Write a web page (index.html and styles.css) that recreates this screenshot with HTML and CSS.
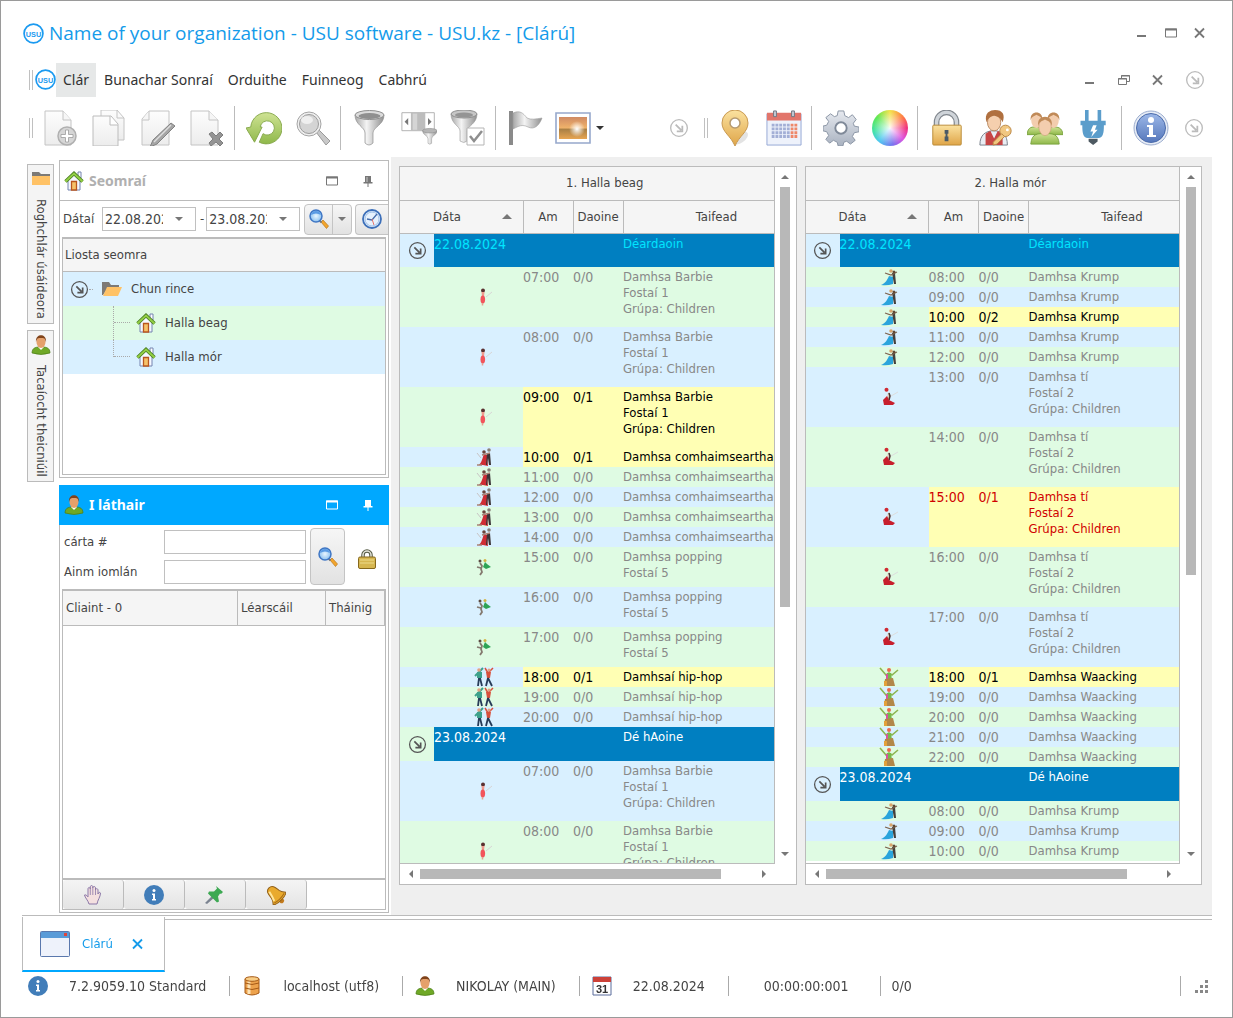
FILE: index.html
```html
<!DOCTYPE html>
<html lang="ga">
<head>
  <meta charset="UTF-8" />
  <title>USU software - Clárú</title>
  <link rel="stylesheet" href="styles.css">
</head>
<body>
  <!-- icon sprite -->
  <svg class="sprite" width="0" height="0" aria-hidden="true">
    <defs>
      <linearGradient id="g-page" x1="0" y1="0" x2="0" y2="1"><stop offset="0" stop-color="#fdfdfd"/><stop offset="1" stop-color="#ececec"/></linearGradient>
      <linearGradient id="g-metal" x1="0" y1="0" x2="1" y2="0"><stop offset="0" stop-color="#a8a8a8"/><stop offset=".4" stop-color="#f4f4f4"/><stop offset="1" stop-color="#8f8f8f"/></linearGradient>
      <linearGradient id="g-green" x1="0" y1="0" x2="0" y2="1"><stop offset="0" stop-color="#cfe394"/><stop offset="1" stop-color="#8fb84a"/></linearGradient>
      <linearGradient id="g-gold" x1="0" y1="0" x2="0" y2="1"><stop offset="0" stop-color="#fbe2a0"/><stop offset="1" stop-color="#dfa548"/></linearGradient>
      <linearGradient id="g-gear" x1="0" y1="0" x2="0" y2="1"><stop offset="0" stop-color="#e6e9ef"/><stop offset="1" stop-color="#a9b2c0"/></linearGradient>
      <linearGradient id="g-sun" x1="0" y1="0" x2="0" y2="1"><stop offset="0" stop-color="#cf8a64"/><stop offset=".5" stop-color="#f0b36a"/><stop offset=".55" stop-color="#a87f45"/><stop offset="1" stop-color="#e7a552"/></linearGradient>
      <linearGradient id="g-info" x1="0" y1="0" x2="0" y2="1"><stop offset="0" stop-color="#9db8e8"/><stop offset="1" stop-color="#5577bb"/></linearGradient>
      <radialGradient id="g-lens"><stop offset="0" stop-color="#e9f6ff"/><stop offset="1" stop-color="#8cc1f0"/></radialGradient>
      <radialGradient id="g-white"><stop offset="0" stop-color="#fff"/><stop offset="1" stop-color="#fff" stop-opacity="0"/></radialGradient>
    </defs>

    <symbol id="i-logo" viewBox="0 0 20 20">
      <circle cx="10" cy="10" r="9" fill="#fff" stroke="#1b9af0" stroke-width="1.6"/>
      <text x="10" y="13" text-anchor="middle" class="logo-text">USU</text>
    </symbol>
    <symbol id="i-add" viewBox="0 0 36 36">
      <path d="M3 1h18l8 9v25H3z" fill="url(#g-page)" stroke="#c4c4c4"/><path d="M21 1v9h8" fill="#f6f6f6" stroke="#c4c4c4"/>
      <circle cx="25" cy="26" r="9" fill="#d6d6d6" stroke="#b0b0b0" stroke-width="1.500"/><path d="M23.500 20h3v4.500h4.500v3h-4.500v4.500h-3v-4.500H19v-3h4.500z" fill="#fff" stroke="#9c9c9c" stroke-width=".8"/>
    </symbol>
    <symbol id="i-copy" viewBox="0 0 36 36">
      <path d="M10 0h16l7 8v22H10z" fill="url(#g-page)" stroke="#c4c4c4"/><path d="M26 0v8h7" fill="none" stroke="#c4c4c4"/>
      <path d="M2 6h18l7 8v22H2z" fill="url(#g-page)" stroke="#bcbcbc"/><path d="M19 6v9h8" fill="#fff" stroke="#bcbcbc"/>
    </symbol>
    <symbol id="i-edit" viewBox="0 0 36 36">
      <path d="M9 1h20v34H2V9z" fill="url(#g-page)" stroke="#c4c4c4"/><path d="M9 1v9H2" fill="#f6f6f6" stroke="#c4c4c4"/>
      <path d="M31 13l4 3-18 18-7 3 3-7z" fill="#a5a5a5" stroke="#828282"/><path d="M31 15L14 32" stroke="#dedede" stroke-width="1.500"/>
    </symbol>
    <symbol id="i-delete" viewBox="0 0 36 36">
      <path d="M2 1h18l9 9v25H2z" fill="url(#g-page)" stroke="#c4c4c4"/><path d="M20 1v9h9" fill="#f6f6f6" stroke="#c4c4c4"/>
      <path d="M20 24l3-2 4 4 4-4 3 3-4 4 4 4-3 3-4-4-5 4-2-3 4-4z" fill="#949494" stroke="#7d7d7d"/>
    </symbol>
    <symbol id="i-refresh" viewBox="0 0 38 36">
      <path d="M5 17A16.500 16.500 0 1 1 14 33L18 24A7.500 7.500 0 1 0 15 17L17 17L9 33L0 18Z" fill="url(#g-green)" stroke="#86a84c"/>
    </symbol>
    <symbol id="i-find" viewBox="0 0 36 36">
      <path d="M21 22l3-2 11 11-4 4z" fill="#c9c9c9" stroke="#9a9a9a"/>
      <circle cx="14" cy="14" r="12" fill="#efefef" stroke="#a5a5a5" stroke-width="1"/><circle cx="14" cy="14" r="9.500" fill="#d4d4d4" stroke="#9c9c9c"/><ellipse cx="12" cy="10" rx="6" ry="4" fill="#efefef"/>
    </symbol>
    <symbol id="i-funnel" viewBox="0 0 36 36">
      <path d="M3 5c0 10 10 12 10 18v10q4 4 8 0V23c0-6 11-8 11-18z" fill="url(#g-metal)" stroke="#909090" stroke-width=".7"/>
      <ellipse cx="17.500" cy="5" rx="14.500" ry="4.500" fill="#dcdcdc" stroke="#8e8e8e"/><ellipse cx="17.500" cy="6" rx="11" ry="3" fill="#8f8f8f"/>
    </symbol>
    <symbol id="i-slider" viewBox="0 0 40 36">
      <path d="M1 1h36v20H1z" fill="#fff" stroke="#ababab"/><path d="M11 1h16v20H11z" fill="#bdbdbd"/><path d="M13 2h5v18h-5z" fill="#d5d5d5"/>
      <path d="M8 7v8l-4-4zM30 7v8l4-4z" fill="#777"/>
      <path d="M24 21c0 5 6 5 6 9v5q2 2 4 0v-5c0-4 6-4 6-9z" fill="url(#g-metal)" stroke="#999" stroke-width=".6"/><ellipse cx="32" cy="21" rx="8" ry="2.500" fill="#b5b5b5" stroke="#8f8f8f" stroke-width=".7"/>
    </symbol>
    <symbol id="i-funnelcheck" viewBox="0 0 36 36">
      <path d="M1 4c0 10 9 12 9 17v10q4 3 7 0V21c0-5 10-7 10-17z" fill="url(#g-metal)" stroke="#999" stroke-width=".6"/>
      <ellipse cx="14" cy="4" rx="13" ry="4" fill="#c6c6c6" stroke="#8e8e8e"/><ellipse cx="14" cy="5" rx="9" ry="2.500" fill="#949494"/>
      <path d="M17 18h17v17H17z" fill="#fff" stroke="#b5b5b5"/><path d="M20 26l4 5 8-10" fill="none" stroke="#8e8e8e" stroke-width="2.500"/>
    </symbol>
    <symbol id="i-flag" viewBox="0 0 36 36">
      <path d="M2 1h4v34H2z" fill="#8a8a8a"/><path d="M6 3c7-3 10 0 14 5 4 2 9 1 15 0-3 8-8 12-14 9-6-3-9-1-15 2z" fill="url(#g-metal)" stroke="#9c9c9c" stroke-width=".6"/>
    </symbol>
    <symbol id="i-image" viewBox="0 0 36 32">
      <path d="M1 1h34v30H1z" fill="#fff" stroke="#96a8cc" stroke-width="1.600"/><path d="M4 5h28v22H4z" fill="url(#g-sun)"/>
      <circle cx="22" cy="17" r="8" fill="url(#g-white)"/>
    </symbol>
    <symbol id="i-more" viewBox="0 0 18 18">
      <circle cx="9" cy="9" r="7.500" fill="none" stroke="currentColor" stroke-width="1.200"/>
      <path d="M6 6l5 5M12 7v5H7" fill="none" stroke="currentColor" stroke-width="1.600"/>
    </symbol>
    <symbol id="i-pin" viewBox="0 0 36 36">
      <ellipse cx="23" cy="28" rx="9" ry="5" fill="#e3e3e3" transform="rotate(-35 23 28)"/>
      <path d="M18 36C14 26 5 22 5 13a13 13 0 0 1 26 0c0 9-9 13-13 23z" fill="url(#g-gold)" stroke="#c99a52"/><circle cx="18" cy="13" r="5" fill="#fff" stroke="#b59a70" stroke-width="1.500"/>
    </symbol>
    <symbol id="i-calendar" viewBox="0 0 38 38">
      <path d="M1 4h36v33H1z" fill="#eef2fb" stroke="#93a6d4"/><path d="M1 3h36v8H1z" fill="#e2756b"/>
      <path d="M8 1h3v6H8zM27 1h3v6h-3z" fill="#c9ced8" stroke="#6d7480"/>
      <path d="M6 16h20M6 20h20M6 24h20M6 28h20" stroke="#a3afd6" stroke-width="3" stroke-dasharray="3 1"/><path d="M26 16h7M26 20h7M26 24h7M26 28h7" stroke="#ee8769" stroke-width="3" stroke-dasharray="3 1"/>
    </symbol>
    <symbol id="i-gear" viewBox="0 0 38 38">
      <path d="M16 1h6l1 5 4 2 4-3 4 5-3 4 1 3 5 1v5l-5 1-2 4 3 4-5 4-4-3-3 1-1 4h-5l-1-4-4-2-4 3-4-4 3-4-2-4-4-1v-5l4-1 2-4-3-4 5-4 4 3 3-1z" fill="url(#g-gear)" stroke="#8993a3"/>
      <circle cx="19" cy="19" r="6" fill="#fff" stroke="#7f8998" stroke-width="2"/>
    </symbol>
    <symbol id="i-lock" viewBox="0 0 36 38">
      <path d="M7 18v-5a10.500 10.500 0 0 1 21 0v5" fill="none" stroke="#7f858c" stroke-width="6"/><path d="M7 18v-5a10.500 10.500 0 0 1 21 0v5" fill="none" stroke="#cfd4d9" stroke-width="3.500"/>
      <rect x="3" y="16" width="30" height="21" rx="1" fill="url(#g-gold)" stroke="#b98a35"/><path d="M15.500 21h4v4h-1v3h1v5h-4v-5h1v-3h-1z" fill="#4b5a66"/>
    </symbol>
    <symbol id="i-userkey" viewBox="0 0 36 38">
      <path d="M1 37c0-11 6-14 12-15h5c7 1 12 4 12 15z" fill="#e9edf3" stroke="#777e8a"/><path d="M7 37V25l5-3 4 8 4-8 5 4v11z" fill="#c64545"/>
      <ellipse cx="16" cy="13" rx="7" ry="9" fill="#f5cfae" stroke="#b88a60"/><path d="M8 13C5 3 12 0 17 0c8 0 11 5 8 13-2-5-5-6-9-7-4 1-6 2-8 7z" fill="#b0703f"/>
      <circle cx="28" cy="22" r="6" fill="#f1c780" stroke="#b98543"/><path d="M24 25l3 3-8 8-4 1v-3z" fill="#f1c780" stroke="#b98543"/><circle cx="30" cy="21" r="1.500" fill="#fff"/>
    </symbol>
    <symbol id="i-users" viewBox="0 0 38 36">
      <path d="M0 25c1-9 6-8 10-8s9 0 9 8zM19 25c0-8 5-8 9-8s9 0 10 8z" fill="url(#g-green)" stroke="#7aa33d"/>
      <ellipse cx="10" cy="10" rx="5.500" ry="8" fill="#f3cdae"/><ellipse cx="28" cy="10" rx="5.500" ry="8" fill="#f3cdae"/>
      <path d="M4 10C2-1 18-1 16 10c-1-4-2-4-6-6-4 2-5 2-6 6zM22 10c-2-11 14-11 12 0-1-4-2-4-6-6-4 2-5 2-6 6z" fill="#c08a58"/>
      <path d="M4 35c1-12 8-11 15-11s14-1 15 11z" fill="url(#g-green)" stroke="#7aa33d"/><ellipse cx="19" cy="17" rx="6.500" ry="9" fill="#f3cdae" stroke="#c99a74" stroke-width=".6"/>
      <path d="M12 16C9 3 29 3 26 16c-1-5-3-5-7-7-4 2-6 2-7 7z" fill="#c08a58"/>
    </symbol>
    <symbol id="i-plug" viewBox="0 0 36 40">
      <path d="M8 0h4v13H8zM22 0h4v13h-4zM3 12h28v5h-2c0 9-1 14-6 14H11c-5 0-6-5-6-14H3z" fill="#5b9dcb"/><path d="M17 17h4l-2 5h3l-7 8 2-6h-3z" fill="#fff"/><path d="M12 32h10v3l-5 4-5-4z" fill="#4d5961"/>
    </symbol>
    <symbol id="i-about" viewBox="0 0 36 36">
      <circle cx="18" cy="18" r="17" fill="#e8edf6" stroke="#9cadcf"/><circle cx="18" cy="18" r="14.500" fill="url(#g-info)" stroke="#4b6baa"/>
      <circle cx="18" cy="10" r="3" fill="#fff"/><path d="M14 15h6v10h3v2h-9v-2h2v-8h-2z" fill="#fff"/>
    </symbol>
    <symbol id="i-info" viewBox="0 0 20 20">
      <circle cx="10" cy="10" r="10" fill="#417db9"/><circle cx="10" cy="5.500" r="1.500" fill="#fff"/><path d="M8 8.500h3V14h1v1.500H8V14h1v-4H8z" fill="#fff"/>
    </symbol>
    <symbol id="i-home" viewBox="0 0 20 20">
      <path d="M14 1h3v6h-3z" fill="#fff" stroke="#7584b0"/><path d="M4 9l6-6 6 6v10H4z" fill="#f5f8ff" stroke="#7584b0"/><path d="M7.500 10.500h5V19h-5z" fill="#f6c26a" stroke="#b9561f" stroke-width="1.300"/>
      <path d="M1.500 10.500L10 2.500l8.500 8" fill="none" stroke="#477b1f" stroke-width="3.500"/><path d="M1.500 10.500L10 2.500l8.500 8" fill="none" stroke="#93cf45" stroke-width="2"/>
    </symbol>
    <symbol id="i-user" viewBox="0 0 18 20">
      <path d="M0 18c0-6 5-6 9-6s9 0 9 6q-9 3-18 0z" fill="#6fa826" stroke="#4b7d16" stroke-width=".7"/><path d="M6 12l3 3 3-3z" fill="#fff"/>
      <ellipse cx="9" cy="7" rx="4.500" ry="6" fill="#e5a06b"/><path d="M4 7C3-2 15-2 14 7c-1-4-2-4-5-4S5 3 4 7z" fill="#80431a"/>
    </symbol>
    <symbol id="i-folder" viewBox="0 0 18 14">
      <path d="M0 0h7l2 2h9v3H0z" fill="#7d7a76"/><path d="M0 4h18v9H0z" fill="#ffc266"/>
    </symbol>
    <symbol id="i-folderopen" viewBox="0 0 20 14">
      <path d="M0 0h7l2 3h8v3H6l-5 7H0z" fill="#7d7a76"/><path d="M5 5h15l-4 9H1z" fill="#ffc266"/>
    </symbol>
    <symbol id="i-search" viewBox="0 0 20 20">
      <path d="M12 13l2-2 5.500 6-2 2.500z" fill="#f3a52b" stroke="#b9771e" stroke-width=".7"/><path d="M10.500 11.500l2 2" stroke="#777" stroke-width="2"/>
      <circle cx="7" cy="7" r="6" fill="url(#g-lens)" stroke="#3f76c4" stroke-width="1.500"/><path d="M2 6q5-3 10 0-1-4-5-4T2 6z" fill="#5a9be4"/>
    </symbol>
    <symbol id="i-clock" viewBox="0 0 20 20">
      <circle cx="10" cy="10" r="9" fill="#e6f1fd" stroke="#3c6fb9" stroke-width="1.800"/><circle cx="10" cy="10" r="7" fill="none" stroke="#9dbfe8"/>
      <path d="M5 10l5 1 5-6" fill="none" stroke="#456cab" stroke-width="1.300"/><path d="M10 10l2 6" stroke="#e4746b"/>
    </symbol>
    <symbol id="i-padlock" viewBox="0 0 18 20">
      <path d="M5 10V6a4 4 0 0 1 8 0v4" fill="none" stroke="#555a45" stroke-width="3.500"/><path d="M5 10V6a4 4 0 0 1 8 0v4" fill="none" stroke="#e5e5da" stroke-width="1.500"/>
      <rect x=".5" y="8" width="17" height="11.500" rx="1.500" fill="#d6b650" stroke="#86681c"/><path d="M2 11h14M2 14h14" stroke="#eedc8c"/>
    </symbol>
    <symbol id="i-hand" viewBox="0 0 18 20">
      <path d="M5 19c-1-4-4-6-4.500-9 2-1 3 2 3.500 2V4c0-2 2-2 2.300 0V2c0-2 2.500-2 2.500 0v1c0-2 2.700-2 2.700 0v2c0-2 2.500-1.500 2.500 0v4c.5-2 2-2 2.500-1 0 4-3 7-3.500 11z" fill="#f4e0e0" stroke="#8b78a8"/>
      <path d="M6.300 4v6M8.800 3v7M11.500 4v6" stroke="#8b78a8" stroke-width=".8"/>
    </symbol>
    <symbol id="i-tack" viewBox="0 0 20 20">
      <path d="M0 18l8-8 2 2-8 7z" fill="#7b8390"/><path d="M11 1l7 6-2 2-1-.5-2 3 1 5-2 1-9-9 1-2 5 0 3-3z" fill="#3da953"/>
    </symbol>
    <symbol id="i-bell" viewBox="0 0 20 20">
      <g transform="rotate(-45 10 10)"><circle cx="10" cy="18" r="2.500" fill="#c27a1c"/><path d="M10 0c5 0 5 5 5.500 9 .5 3 2 4 3.500 6-3 3-15 3-18 0 1.500-2 3-3 3.500-6C5 5 5 0 10 0z" fill="#e9aa2d" stroke="#92601a"/><path d="M7.500 3q-1 5-3 10" fill="none" stroke="#ffe59a" stroke-width="2"/><path d="M3 14.500q7 2 14 0" fill="none" stroke="#a86d17"/></g>
    </symbol>
    <symbol id="i-window" viewBox="0 0 30 26">
      <rect x=".5" y=".5" width="29" height="25" rx="1" fill="#eef2fb" stroke="#5a78ad"/><path d="M1 1h28v6H1z" fill="#5a9bd8"/><path d="M24 2h3v3h-3z" fill="#e0443c"/>
    </symbol>
    <symbol id="i-db" viewBox="0 0 16 20">
      <path d="M1 3v14q7 4 14 0V3z" fill="#eda24c" stroke="#a65a17"/><path d="M5 4v14" stroke="#fde3b5" stroke-width="3"/>
      <path d="M1 7q7 3 14 0M1 12q7 3 14 0" fill="none" stroke="#a65a17"/><ellipse cx="8" cy="3" rx="7" ry="2.300" fill="#f9cd85" stroke="#a65a17"/>
    </symbol>
    <symbol id="i-day" viewBox="0 0 20 20">
      <path d="M1 1h18v18H1z" fill="#fff" stroke="#5b6d9c"/><path d="M1 1h18v5H1z" fill="#cc4138"/><text x="10" y="17" text-anchor="middle" class="day-text">31</text>
    </symbol>
    <symbol id="i-min" viewBox="0 0 14 12"><path d="M2 9h9" stroke="currentColor" stroke-width="2"/></symbol>
    <symbol id="i-max" viewBox="0 0 14 12"><path d="M1.500 2h11v8h-11z" fill="none" stroke="currentColor"/><path d="M1 2.500h12" stroke="currentColor" stroke-width="2"/></symbol>
    <symbol id="i-restore" viewBox="0 0 14 12"><path d="M4.500 4V1.500h8v6H10M1.500 4.500h8v6h-8z" fill="none" stroke="currentColor"/><path d="M1 5h9M4 2h9" stroke="currentColor"/></symbol>
    <symbol id="i-close" viewBox="0 0 14 12"><path d="M2 1.500l9 9M11 1.500l-9 9" stroke="currentColor" stroke-width="1.800"/></symbol>
    <symbol id="i-pushpin" viewBox="0 0 12 12"><path d="M3 1h6v6h1.500v1.500h-9V7H3z" fill="currentColor"/><path d="M6 8v4" stroke="currentColor"/><path d="M5 2v5" stroke="#fff" stroke-opacity=".6"/></symbol>

    <!-- dance styles -->
    <symbol id="d-barbie" viewBox="0 0 20 20">
      <path d="M12 10l6-5" stroke="#d8d5d5"/><circle cx="9" cy="3.500" r="2" fill="#5a3030"/><path d="M7.500 5h3l-.5 5H8z" fill="#ef9a8e"/><ellipse cx="8.800" cy="12.500" rx="2.300" ry="4" fill="#f2545b"/><path d="M8.500 16v2.500" stroke="#e5a08f" stroke-width="1.500"/>
    </symbol>
    <symbol id="d-modern" viewBox="0 0 20 20">
      <path d="M3 6l4 5" stroke="#c9c5c5"/><path d="M5 18c3-3 3-6 5-11l3 1 1 11-5-1z" fill="#cf2d35"/><path d="M13 6h3l1 12h-2l-1-7-1 7h-1z" fill="#3a3335"/><circle cx="10" cy="5" r="1.800" fill="#6b443b"/><circle cx="15" cy="3" r="1.800" fill="#8a8078"/><path d="M8 8l8-2M3 18h5" stroke="#a88275" stroke-width="1.300"/>
    </symbol>
    <symbol id="d-popping" viewBox="0 0 20 20">
      <circle cx="6" cy="4" r="1.500" fill="#5b4a42"/><circle cx="11" cy="3.500" r="1.500" fill="#d1b344"/><path d="M6 6l2 3-1 3 1 3-2 3M3 10l4 1" fill="none" stroke="#84796f" stroke-width="1.800"/><path d="M11 5l2 2 4 3-5 2-3-2z" fill="#2ea457"/>
    </symbol>
    <symbol id="d-hiphop" viewBox="0 0 20 20">
      <path d="M1 9l4-4 4-4" stroke="#3ca18b" stroke-width="2"/><path d="M3 5h5v6H3z" fill="#3ca18b"/><path d="M12 5h5l-1 6h-3z" fill="#d8513d"/><path d="M11 1l3 5 5-5" stroke="#d8513d" stroke-width="1.500" fill="none"/>
      <circle cx="5" cy="3" r="1.800" fill="#e2a183"/><circle cx="15" cy="3" r="1.500" fill="#e2a183"/><path d="M5 11l-1 8M6 11l2 8M14 11l-2 8M14 11l4 8" stroke="#273c58" stroke-width="1.800"/>
    </symbol>
    <symbol id="d-krump" viewBox="0 0 20 20">
      <path d="M2 18c5-2 6-5 8-9l4 1v7q-6 2-12 1z" fill="#2aa4dc"/><path d="M13 6h3l1 11h-2z" fill="#45403c"/><path d="M6 6l6 2 6-3" fill="none" stroke="#7e6550" stroke-width="1.200"/><circle cx="12" cy="4" r="1.800" fill="#d8a56d"/><circle cx="15" cy="5" r="1.500" fill="#614935"/>
    </symbol>
    <symbol id="d-house" viewBox="0 0 20 20">
      <path d="M12 9l7-4" stroke="#ddd"/><circle cx="7.500" cy="2.800" r="2" fill="#d02b33"/><path d="M9 5l2 3v5H8z" fill="#d9c9b9"/><path d="M10 6l1 3-1 4" stroke="#46302e" stroke-width="1.500" fill="none"/><path d="M8 9l2 4 6 3-2 2H5l-1-5z" fill="#c71f2d"/>
    </symbol>
    <symbol id="d-waacking" viewBox="0 0 20 20">
      <path d="M1 1l6 7 3-2 3 2 6-5" fill="none" stroke="#8db552" stroke-width="1.600"/><circle cx="10" cy="3" r="2" fill="#e8694d"/><path d="M8 6h4l1 7H8z" fill="#76b84a"/><path d="M8 7v5" stroke="#d655a0" stroke-width="2"/><path d="M6 12l8-1 2 8H5z" fill="#b28749"/><path d="M5 14h3v5H5z" fill="#e3a03a"/>
    </symbol>
  </svg>

  <header class="title-bar">
    <svg class="logo"><use href="#i-logo"/></svg>
    <h1>Name of your organization - USU software - USU.kz - [Clárú]</h1>
    <div class="window-controls">
      <button aria-label="Íoslaghdaigh"><svg><use href="#i-min"/></svg></button>
      <button aria-label="Uasmhéadaigh"><svg><use href="#i-max"/></svg></button>
      <button aria-label="Dún"><svg><use href="#i-close"/></svg></button>
    </div>
  </header>

  <nav class="menu-bar">
    <span class="grip"></span>
    <svg class="logo"><use href="#i-logo"/></svg>
    <div class="menu-items">
      <button class="active">Clár</button>
      <button>Bunachar Sonraí</button>
      <button>Orduithe</button>
      <button>Fuinneog</button>
      <button>Cabhrú</button>
    </div>
    <div class="child-controls">
      <button aria-label="Íoslaghdaigh"><svg><use href="#i-min"/></svg></button>
      <button aria-label="Athchóirigh"><svg><use href="#i-restore"/></svg></button>
      <button aria-label="Dún"><svg><use href="#i-close"/></svg></button>
      <button class="more" aria-label="Tuilleadh"><svg><use href="#i-more"/></svg></button>
    </div>
  </nav>

  <div class="toolbars">
    <div class="toolbar" role="toolbar">
      <span class="grip"></span>
      <button aria-label="Cuir leis"><svg><use href="#i-add"/></svg></button>
      <button aria-label="Cóipeáil"><svg><use href="#i-copy"/></svg></button>
      <button aria-label="Cuir in eagar"><svg><use href="#i-edit"/></svg></button>
      <button aria-label="Scrios"><svg><use href="#i-delete"/></svg></button>
      <span class="separator"></span>
      <button aria-label="Athnuaigh"><svg><use href="#i-refresh"/></svg></button>
      <button aria-label="Cuardaigh"><svg><use href="#i-find"/></svg></button>
      <span class="separator"></span>
      <button aria-label="Scagaire"><svg><use href="#i-funnel"/></svg></button>
      <button aria-label="Scagaire colúin"><svg><use href="#i-slider"/></svg></button>
      <button aria-label="Scagaire roghnaithe"><svg><use href="#i-funnelcheck"/></svg></button>
      <span class="separator"></span>
      <button aria-label="Bratach"><svg><use href="#i-flag"/></svg></button>
      <button class="with-arrow" aria-label="Íomhá"><svg><use href="#i-image"/></svg><i class="arrow down dark"></i></button>
      <button class="more" aria-label="Tuilleadh"><svg><use href="#i-more"/></svg></button>
    </div>
    <div class="toolbar second" role="toolbar">
      <span class="grip"></span>
      <button aria-label="Léarscáil"><svg><use href="#i-pin"/></svg></button>
      <button aria-label="Féilire"><svg><use href="#i-calendar"/></svg></button>
      <span class="separator"></span>
      <button aria-label="Socruithe"><svg><use href="#i-gear"/></svg></button>
      <button aria-label="Dathanna"><span class="color-wheel"></span></button>
      <span class="separator"></span>
      <button aria-label="Glas"><svg><use href="#i-lock"/></svg></button>
      <button aria-label="Cearta"><svg><use href="#i-userkey"/></svg></button>
      <button aria-label="Úsáideoirí"><svg><use href="#i-users"/></svg></button>
      <button aria-label="Ceangal"><svg><use href="#i-plug"/></svg></button>
      <span class="separator"></span>
      <button aria-label="Eolas"><svg><use href="#i-about"/></svg></button>
      <button class="more" aria-label="Tuilleadh"><svg><use href="#i-more"/></svg></button>
    </div>
  </div>

  <main>
    <div class="side-tabs">
      <button><svg class="icon folder"><use href="#i-folder"/></svg><span>Roghchlár úsáideora</span></button>
      <button><svg class="icon"><use href="#i-user"/></svg><span>Tacaíocht theicniúil</span></button>
    </div>

    <div class="dock">
      <section class="panel rooms">
        <div class="panel-head">
          <svg class="icon"><use href="#i-home"/></svg>
          <h2>Seomraí</h2>
          <button aria-label="Uasmhéadaigh"><svg><use href="#i-max"/></svg></button>
          <button aria-label="Pionnáil"><svg><use href="#i-pushpin"/></svg></button>
        </div>
        <div class="date-row">
          <label for="dateFrom">Dátaí</label>
          <div class="combo"><input id="dateFrom" type="text" value="22.08.2024"><button aria-label="Oscail"><i class="arrow down"></i></button></div>
          <label for="dateTo">-</label>
          <div class="combo"><input id="dateTo" type="text" value="23.08.2024"><button aria-label="Oscail"><i class="arrow down"></i></button></div>
          <div class="split">
            <button aria-label="Cuardaigh"><svg class="icon"><use href="#i-search"/></svg></button>
            <button class="drop" aria-label="Roghanna"><i class="arrow down"></i></button>
          </div>
          <button class="raised clock" aria-label="Inniu"><svg class="icon"><use href="#i-clock"/></svg></button>
        </div>
        <div class="tree">
          <div class="tree-head">Liosta seomra</div>
          <div class="tree-row">
            <svg class="expander"><use href="#i-more"/></svg><span class="dots"></span>
            <svg class="icon open-folder"><use href="#i-folderopen"/></svg><span>Chun rince</span>
          </div>
          <div class="tree-row child"><span class="branch"></span><svg class="icon"><use href="#i-home"/></svg><span>Halla beag</span></div>
          <div class="tree-row child last"><span class="branch"></span><svg class="icon"><use href="#i-home"/></svg><span>Halla mór</span></div>
        </div>
      </section>

      <section class="panel present">
        <div class="panel-head selected">
          <svg class="icon"><use href="#i-user"/></svg>
          <h2>I láthair</h2>
          <button aria-label="Uasmhéadaigh"><svg><use href="#i-max"/></svg></button>
          <button aria-label="Pionnáil"><svg><use href="#i-pushpin"/></svg></button>
        </div>
        <div class="client-form">
          <div class="fields">
            <label for="card">cárta #</label>
            <input id="card" type="text" autofocus>
            <label for="fullName">Ainm iomlán</label>
            <input id="fullName" type="text">
          </div>
          <button class="raised" aria-label="Cuardaigh"><svg class="icon"><use href="#i-search"/></svg></button>
          <svg class="icon padlock"><use href="#i-padlock"/></svg>
        </div>
        <div class="client-list">
          <table>
            <colgroup><col><col class="col-map"><col class="col-came"></colgroup>
            <thead>
              <tr><th>Cliaint - 0</th><th>Léarscáil</th><th>Tháinig</th></tr>
            </thead>
          </table>
        </div>
        <div class="client-actions">
          <button aria-label="Lámh"><svg class="icon"><use href="#i-hand"/></svg></button>
          <button aria-label="Eolas"><svg class="icon"><use href="#i-info"/></svg></button>
          <button aria-label="Pionna"><svg class="icon"><use href="#i-tack"/></svg></button>
          <button aria-label="Cloigín"><svg class="icon"><use href="#i-bell"/></svg></button>
        </div>
      </section>
    </div>

    <div class="workspace">
      <section class="schedule">
        <div class="viewport">
          <table>
            <colgroup><col class="col-tree"><col class="col-date"><col class="col-num"><col class="col-num"><col></colgroup>
            <thead>
              <tr><th colspan="5">1. Halla beag</th></tr>
              <tr><th colspan="2" class="sorted"><span>Dáta<i class="arrow up"></i></span></th><th>Am</th><th>Daoine</th><th>Taifead</th></tr>
            </thead>
            <tbody id="hall1"></tbody>
          </table>
        </div>
        <div class="vscroll"><i class="arrow up"></i><div class="track"><span class="thumb long"></span></div><i class="arrow down"></i></div>
        <div class="hscroll"><i class="arrow left"></i><div class="track"><span class="thumb"></span></div><i class="arrow right"></i></div>
      </section>
      <section class="schedule">
        <div class="viewport">
          <table>
            <colgroup><col class="col-tree"><col class="col-date"><col class="col-num"><col class="col-num"><col></colgroup>
            <thead>
              <tr><th colspan="5">2. Halla mór</th></tr>
              <tr><th colspan="2" class="sorted"><span>Dáta<i class="arrow up"></i></span></th><th>Am</th><th>Daoine</th><th>Taifead</th></tr>
            </thead>
            <tbody id="hall2"></tbody>
          </table>
        </div>
        <div class="vscroll"><i class="arrow up"></i><div class="track"><span class="thumb"></span></div><i class="arrow down"></i></div>
        <div class="hscroll"><i class="arrow left"></i><div class="track"><span class="thumb"></span></div><i class="arrow right"></i></div>
      </section>
    </div>
  </main>

  <div class="doc-tabs">
    <div class="doc-tab">
      <svg><use href="#i-window"/></svg>
      <a href="#">Clárú</a>
      <button aria-label="Dún"><svg><use href="#i-close"/></svg></button>
    </div>
  </div>

  <footer class="status-bar">
    <div><svg class="icon"><use href="#i-info"/></svg><span>7.2.9059.10 Standard</span></div>
    <div><svg class="icon"><use href="#i-db"/></svg><span>localhost (utf8)</span></div>
    <div><svg class="icon"><use href="#i-user"/></svg><span>NIKOLAY (MAIN)</span></div>
    <div><svg class="icon"><use href="#i-day"/></svg><span>22.08.2024</span></div>
    <div class="timer"><span>00:00:00:001</span></div>
    <div class="count"><span>0/0</span></div>
    <svg class="resize" viewBox="0 0 14 14"><path d="M10 1h3v3h-3zM5 6h3v3H5zM10 6h3v3h-3zM0 11h3v3H0zM5 11h3v3H5zM10 11h3v3h-3z" fill="#888"/></svg>
  </footer>

  <script src="script.js"></script>
</body>
</html>
```
FILE: styles.css
```css
* {
  box-sizing: border-box;
}
body {
  margin: 0;
  height: 100vh;
  display: flex;
  flex-direction: column;
  border: 1px solid #9a9a9a;
  background: white;
  color: #444;
  font-family: Tahoma, "DejaVu Sans Condensed", "DejaVu Sans", sans-serif;
  font-size: 13px;
  line-height: 16px;
  overflow: hidden;
}
.sprite {
  position: absolute;
}
button {
  display: flex;
  align-items: center;
  justify-content: center;
  padding: 0;
  border: none;
  background: none;
  color: inherit;
  font: inherit;
  cursor: pointer;
}
h1, h2 {
  margin: 0;
}
svg {
  flex: none;
  width: 14px;
  height: 12px;
}
.icon {
  width: 20px;
  height: 20px;
}
.logo {
  width: 21px;
  height: 21px;
}
.logo-text {
  font-family: "Liberation Sans", sans-serif;
  font-size: 7px;
  font-weight: bold;
  fill: #1b9af0;
}
.day-text {
  font-family: "Liberation Sans", sans-serif;
  font-size: 11px;
  font-weight: bold;
  fill: #333;
}

/* small triangles */
.arrow {
  width: 0;
  height: 0;
  border: 4px solid transparent;
}
.arrow.down {
  border-top-color: #777;
  border-bottom: 0;
}
.arrow.down.dark {
  border-top-color: #333;
}
.arrow.up {
  border-bottom-color: #777;
  border-top: 0;
}
.arrow.left {
  border-right-color: #777;
  border-left: 0;
}
.arrow.right {
  border-left-color: #777;
  border-right: 0;
}

.title-bar {
  display: flex;
  align-items: center;
  height: 60px;
  padding: 4px 25px 0 22px;
}
.title-bar h1 {
  flex: 1;
  margin-left: 5px;
  color: #149bea;
  font-family: "Open Sans", "Noto Sans", sans-serif;
  font-size: 19px;
  font-weight: normal;
  line-height: 24px;
}
.window-controls {
  display: flex;
  gap: 15px;
  color: #777;
}

.menu-bar {
  display: flex;
  align-items: center;
  height: 37px;
  padding: 0 27px 0 28px;
}
.menu-items {
  display: flex;
  gap: 1px;
}
.menu-items button {
  height: 34px;
  padding: 0 7px;
  color: #333;
  font-family: "Noto Sans", sans-serif;
  font-size: 14px;
}
.menu-items .active {
  background: #e6e8e8;
}
.grip {
  width: 4px;
  height: 20px;
  margin-right: 2px;
  border: solid #c0c0c0;
  border-width: 0 1px;
}
.child-controls {
  display: flex;
  align-items: center;
  gap: 20px;
  margin-left: auto;
  color: #777;
}
.more {
  color: #bbb;
}
.more svg {
  width: 20px;
  height: 20px;
}

.toolbars {
  display: flex;
  height: 59px;
  padding: 0 28px 0 28px;
  justify-content: space-between;
}
.toolbar {
  display: flex;
  align-items: center;
}
.toolbar button {
  width: 49px;
  height: 48px;
}
.toolbar button svg {
  width: 36px;
  height: 36px;
}
.toolbar .with-arrow {
  justify-content: flex-start;
  width: 76px;
  padding-left: 6px;
  gap: 5px;
}
.toolbar .more {
  width: 20px;
  margin-left: 44px;
}
.toolbar .more svg {
  width: 20px;
  height: 20px;
}
.toolbar.second .more {
  margin-left: 9px;
}
.separator {
  width: 1px;
  height: 44px;
  margin: 0 4px 0 3px;
  background: #bbb;
}
.color-wheel {
  width: 36px;
  height: 36px;
  border-radius: 50%;
  background:
    radial-gradient(circle, #ffffffee 0, #ffffff00 65%),
    conic-gradient(#f3e34c, #ff7b45 50deg, #f0337f 90deg, #dd55e0 130deg, #7a72ef 170deg, #4fc9f0 220deg, #43e3a4 260deg, #61e854 310deg, #f3e34c);
}

main {
  flex: 1;
  display: flex;
  min-height: 0;
  padding: 0 20px 0 26px;
}
.side-tabs {
  display: flex;
  flex-direction: column;
  gap: 6px;
  width: 27px;
  margin-right: 5px;
  padding-top: 7px;
}
.side-tabs button {
  flex-direction: column;
  gap: 10px;
  padding: 4px 2px;
  border: 1px solid #bbb;
  background: #f4f4f4;
}
.side-tabs span {
  writing-mode: vertical-rl;
}
.side-tabs .folder {
  width: 18px;
}

.dock {
  display: flex;
  flex-direction: column;
  gap: 7px;
  width: 330px;
  margin: 3px 2px 2px 0;
}
.panel {
  display: flex;
  flex-direction: column;
  min-height: 0;
  padding: 0 2px 2px;
  border: 1px solid #bbb;
}
.rooms {
  flex: 0 0 318px;
}
.present {
  flex: 1;
}
.panel-head {
  display: flex;
  flex: none;
  align-items: center;
  gap: 5px;
  height: 40px;
  margin: 0 -2px;
  padding: 0 13px 0 4px;
  border-bottom: 1px solid #bbb;
  color: #777;
}
.panel-head h2 {
  flex: 1;
  color: #b0b0b0;
  font-family: "Noto Sans", sans-serif;
  font-size: 14px;
}
.panel-head button {
  margin-left: 17px;
}
.panel-head.selected {
  margin: -1px -3px 0;
  padding: 0 14px 0 5px;
  border-color: #00a8ff;
  background: #00a8ff;
  color: white;
}
.panel-head.selected h2 {
  color: white;
}
input {
  border: 1px solid #c0c0c0;
  outline: none;
  background: white;
  color: #444;
  font: inherit;
}

.date-row {
  display: flex;
  flex: none;
  align-items: center;
  height: 36px;
}
.date-row label:first-child {
  width: 40px;
  padding-left: 1px;
}
.combo {
  display: flex;
  width: 94px;
  height: 24px;
  border: 1px solid #c0c0c0;
}
.combo + label {
  padding: 0 2px 0 4px;
}
.combo input {
  width: 60px;
  padding: 0 0 0 2px;
  border: none;
  font-size: 14px;
}
.combo button {
  width: 32px;
}
.raised, .split {
  border: 1px solid #c4c4c4;
  border-radius: 4px;
  background: linear-gradient(#f6f6f6, #e2e2e2);
}
.split {
  display: flex;
  flex: none;
  width: 48px;
  height: 31px;
  margin: 0 3px 0 4px;
}
.split button {
  flex: 1;
}
.split .drop {
  flex: 0 0 19px;
  border-left: 1px solid #c4c4c4;
}
.clock {
  flex: 1;
  height: 31px;
  margin-right: -2px;
  border-right: none;
  border-radius: 4px 0 0 4px;
}

.tree {
  flex: 1;
  border: 1px solid #bbb;
  border-top-width: 2px;
}
.tree-head {
  height: 33px;
  padding: 8px 2px;
  border-bottom: 1px solid #bbb;
  background: #f5f5f5;
}
.tree-row {
  display: flex;
  align-items: center;
  gap: 9px;
  height: 34px;
  background: #d9f0ff;
}
.tree-row:nth-child(odd) {
  background: #dffbe3;
}
.expander {
  width: 19px;
  height: 19px;
  color: #555;
}
.tree-row .expander {
  margin: 0 -9px 0 7px;
}
.dots {
  width: 4px;
  border-top: 1px dotted #aaa;
}
.open-folder {
  height: 14px;
}
/* dotted lines from the folder to its rooms */
.branch {
  position: relative;
  align-self: stretch;
  width: 14px;
  margin-left: 50px;
  border-left: 1px dotted #aaa;
}
.last .branch {
  align-self: flex-start;
  height: 17px;
}
.branch::after {
  content: "";
  position: absolute;
  top: 16px;
  left: 0;
  width: 16px;
  border-top: 1px dotted #aaa;
}

.client-form {
  display: flex;
  flex: none;
  gap: 4px;
  height: 64px;
  padding: 3px 0 0 2px;
}
.fields {
  display: grid;
  grid-template-columns: 100px 142px;
  grid-template-rows: 24px 24px;
  row-gap: 6px;
  align-items: center;
  padding-top: 2px;
}
.fields input {
  width: 100%;
  height: 24px;
}
.client-form .raised {
  width: 35px;
  height: 57px;
}
.padlock {
  align-self: center;
  margin-left: 8px;
}
.client-list {
  flex: 1;
  border: 1px solid #bbb;
  border-top-width: 2px;
}
table {
  width: 100%;
  table-layout: fixed;
  border-collapse: collapse;
}
th {
  padding: 0;
  background: #f5f5f5;
  color: #444;
  font-weight: normal;
}
.client-list th {
  height: 34px;
  padding: 0 3px;
  border: 1px solid #bbb;
  border-width: 0 1px 1px 0;
  text-align: left;
}
.col-map {
  width: 88px;
}
.col-came {
  width: 59px;
}
.client-actions {
  display: flex;
  flex: none;
  height: 31px;
  border: 1px solid #bbb;
}
.client-actions button {
  width: 61px;
  border-right: 1px solid #bbb;
  border-radius: 3px;
  background: linear-gradient(#f4f4f4, #e4e4e4);
}

.workspace {
  flex: 1;
  display: flex;
  gap: 8px;
  min-width: 0;
  padding: 9px 10px 30px 8px;
  background: #efefef;
}
.schedule {
  flex: 1;
  display: grid;
  grid-template-columns: minmax(0, 1fr) 21px;
  grid-template-rows: minmax(0, 1fr) 20px;
  min-width: 0;
  border: 1px solid #bbb;
  background: white;
}
.viewport {
  overflow: hidden;
  border: solid #bbb;
  border-width: 0 1px 1px 0;
}
.viewport table {
  width: calc(100% + 37px);
}
.col-tree {
  width: 34px;
}
.col-date {
  width: 89px;
}
.col-num {
  width: 50px;
}
.viewport th {
  height: 33px;
  border: solid #bbb;
  border-width: 0 1px 1px 0;
}
.sorted span {
  display: flex;
  align-items: center;
  justify-content: space-between;
  padding: 0 11px 0 33px;
}
.sorted .arrow {
  border-width: 0 5px 5px;
}
.viewport td {
  padding: 2px 0 0;
  vertical-align: top;
  white-space: pre-line;
}
.viewport tr {
  height: 20px;
  background: #dffbe3;
  color: #888;
}
.viewport tbody tr:nth-child(odd) {
  background: #d9f0ff;
}
.viewport tr.lines-2 {
  height: 40px;
}
.viewport tr.lines-3 {
  height: 60px;
}
.viewport .num {
  font-size: 14px;
}
.viewport .dance, .viewport .toggle {
  padding: 0;
  vertical-align: middle;
  text-align: center;
}
.dance {
  font-size: 0;
  line-height: 0;
}
.dance svg {
  width: 20px;
  height: 20px;
  margin-left: 44px;
}
.toggle svg {
  display: block;
  margin: 0 auto;
}
.viewport tr.day {
  height: 34px;
  color: white;
}
.viewport .today {
  color: #00e5ff;
}
.day td:not(.toggle) {
  background: #007fc1;
}
.booked td:not(.dance) {
  background: #ffffb4;
  color: black;
}
.viewport .late td:not(.dance) {
  color: #d00000;
}

.vscroll, .hscroll {
  display: flex;
  align-items: center;
  justify-content: space-between;
}
.vscroll {
  flex-direction: column;
  padding: 8px 0;
}
.hscroll {
  padding: 0 9px;
}
.track {
  flex: 1;
}
.vscroll .track {
  width: 10px;
  margin: 8px 0;
}
.hscroll .track {
  height: 10px;
  margin: 0 7px;
}
.thumb {
  display: block;
  width: 90%;
  height: 100%;
  background: #b8b8b8;
}
.vscroll .thumb {
  width: 100%;
  height: 59%;
}
.vscroll .thumb.long {
  height: 64%;
}

.doc-tabs {
  flex: none;
  margin: 0 20px 0 21px;
  border-top: 1px solid #bbb;
}
.doc-tabs::before {
  content: "";
  display: block;
  height: 3px;
  border-bottom: 1px solid #bbb;
}
.doc-tab {
  position: relative;
  display: flex;
  align-items: center;
  width: 143px;
  height: 55px;
  margin-top: -3px;
  padding: 0 19px 0 17px;
  border: 1px solid #bbb;
  border-width: 0 1px 2px;
  border-bottom-color: #00a8ff;
  background: white;
  color: #149bea;
}
.doc-tab > svg {
  width: 30px;
  height: 26px;
}
.doc-tab a {
  flex: 1;
  margin-left: 12px;
  color: inherit;
  text-decoration: none;
}

.status-bar {
  display: flex;
  flex: none;
  align-items: center;
  height: 45px;
  padding: 0 23px 17px 27px;
  font-size: 14px;
}
.status-bar div {
  display: flex;
  align-items: center;
  gap: 21px;
  height: 20px;
  padding: 0 23px 0 12px;
  border-right: 1px solid #aaa;
}
.status-bar div:first-child {
  padding-left: 0;
}
.status-bar .timer {
  padding: 0 31px 0 35px;
}
.status-bar .count {
  flex: 1;
  padding-left: 11px;
}
.resize {
  height: 14px;
  margin-left: 14px;
}
```
FILE: script.js
```js
const barbie = 'Damhsa Barbie\nFostaí 1\nGrúpa: Children';
const house = 'Damhsa tí\nFostaí 2\nGrúpa: Children';
const popping = 'Damhsa popping\nFostaí 5';

// day rows: [date, weekday, class]; lessons: [icon, time, people, text, class]
const halls = {
  hall1: [
    ['22.08.2024', 'Déardaoin', 'today'],
    ['barbie', '07:00', '0/0', barbie, ''],
    ['barbie', '08:00', '0/0', barbie, ''],
    ['barbie', '09:00', '0/1', barbie, 'booked'],
    ['modern', '10:00', '0/1', 'Damhsa comhaimseartha', 'booked'],
    ['modern', '11:00', '0/0', 'Damhsa comhaimseartha', ''],
    ['modern', '12:00', '0/0', 'Damhsa comhaimseartha', ''],
    ['modern', '13:00', '0/0', 'Damhsa comhaimseartha', ''],
    ['modern', '14:00', '0/0', 'Damhsa comhaimseartha', ''],
    ['popping', '15:00', '0/0', popping, ''],
    ['popping', '16:00', '0/0', popping, ''],
    ['popping', '17:00', '0/0', popping, ''],
    ['hiphop', '18:00', '0/1', 'Damhsaí hip-hop', 'booked'],
    ['hiphop', '19:00', '0/0', 'Damhsaí hip-hop', ''],
    ['hiphop', '20:00', '0/0', 'Damhsaí hip-hop', ''],
    ['23.08.2024', 'Dé hAoine', ''],
    ['barbie', '07:00', '0/0', barbie, ''],
    ['barbie', '08:00', '0/0', barbie, '']
  ],
  hall2: [
    ['22.08.2024', 'Déardaoin', 'today'],
    ['krump', '08:00', '0/0', 'Damhsa Krump', ''],
    ['krump', '09:00', '0/0', 'Damhsa Krump', ''],
    ['krump', '10:00', '0/2', 'Damhsa Krump', 'booked'],
    ['krump', '11:00', '0/0', 'Damhsa Krump', ''],
    ['krump', '12:00', '0/0', 'Damhsa Krump', ''],
    ['house', '13:00', '0/0', house, ''],
    ['house', '14:00', '0/0', house, ''],
    ['house', '15:00', '0/1', house, 'booked late'],
    ['house', '16:00', '0/0', house, ''],
    ['house', '17:00', '0/0', house, ''],
    ['waacking', '18:00', '0/1', 'Damhsa Waacking', 'booked'],
    ['waacking', '19:00', '0/0', 'Damhsa Waacking', ''],
    ['waacking', '20:00', '0/0', 'Damhsa Waacking', ''],
    ['waacking', '21:00', '0/0', 'Damhsa Waacking', ''],
    ['waacking', '22:00', '0/0', 'Damhsa Waacking', ''],
    ['23.08.2024', 'Dé hAoine', ''],
    ['krump', '08:00', '0/0', 'Damhsa Krump', ''],
    ['krump', '09:00', '0/0', 'Damhsa Krump', ''],
    ['krump', '10:00', '0/0', 'Damhsa Krump', '']
  ]
};

function dayRow([date, weekday, cls]) {
  return `<tr class="day"><td class="toggle"><svg class="expander"><use href="#i-more"/></svg></td>` +
    `<td colspan="3" class="num ${cls}">${date}</td><td class="${cls}">${weekday}</td></tr>`;
}

function lessonRow([icon, time, people, text, cls]) {
  const lines = text.split('\n').length;
  return `<tr class="lines-${lines} ${cls}"><td colspan="2" class="dance"><svg><use href="#d-${icon}"/></svg></td>` +
    `<td class="num">${time}</td><td class="num">${people}</td><td>${text}</td></tr>`;
}

for (const id in halls) {
  document.getElementById(id).innerHTML = halls[id]
    .map(row => row.length === 3 ? dayRow(row) : lessonRow(row))
    .join('');
}
```
